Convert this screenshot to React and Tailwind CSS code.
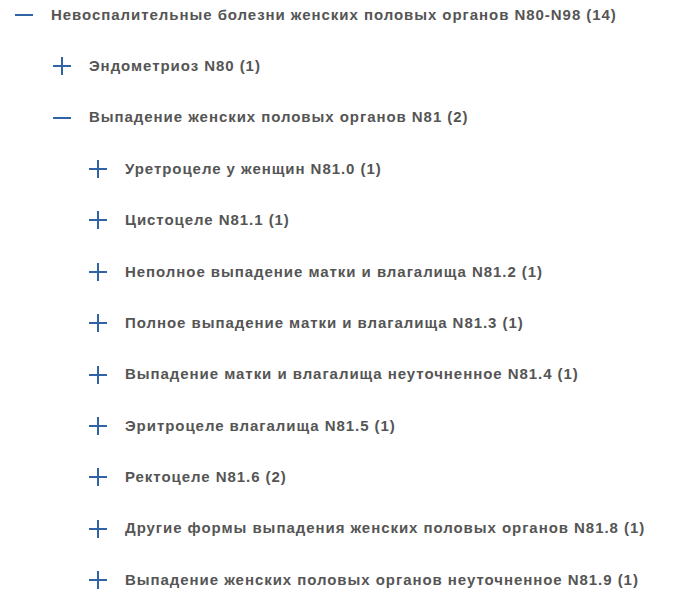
import React from 'react';

const items = [
  { level: 0, open: true, label: 'Невоспалительные болезни женских половых органов N80-N98 (14)' },
  { level: 1, open: false, label: 'Эндометриоз N80 (1)' },
  { level: 1, open: true, label: 'Выпадение женских половых органов N81 (2)' },
  { level: 2, open: false, label: 'Уретроцеле у женщин N81.0 (1)' },
  { level: 2, open: false, label: 'Цистоцеле N81.1 (1)' },
  { level: 2, open: false, label: 'Неполное выпадение матки и влагалища N81.2 (1)' },
  { level: 2, open: false, label: 'Полное выпадение матки и влагалища N81.3 (1)' },
  { level: 2, open: false, label: 'Выпадение матки и влагалища неуточненное N81.4 (1)' },
  { level: 2, open: false, label: 'Эритроцеле влагалища N81.5 (1)' },
  { level: 2, open: false, label: 'Ректоцеле N81.6 (2)' },
  { level: 2, open: false, label: 'Другие формы выпадения женских половых органов N81.8 (1)' },
  { level: 2, open: false, label: 'Выпадение женских половых органов неуточненное N81.9 (1)' },
];

const pad = ['pl-[14px]', 'pl-[52px]', 'pl-[88px]'];

function Toggle({ open }) {
  return (
    <svg width="20" height="20" viewBox="0 0 20 20" className="shrink-0">
      <line x1="1" y1="10" x2="19" y2="10" stroke="#2f63a3" strokeWidth="2" />
      {!open && <line x1="10" y1="1" x2="10" y2="19" stroke="#2f63a3" strokeWidth="2" />}
    </svg>
  );
}

export default function App() {
  return (
    <div className="w-[676px] h-[602px] bg-white overflow-hidden" style={{ fontFamily: '"Liberation Sans", Arial, sans-serif' }}>
      <div className="flex flex-col gap-[21.36px]">
        {items.map((item, i) => (
          <div key={i} className={`flex items-center h-[30px] ${pad[item.level]}`}>
            <Toggle open={item.open} />
            <span className="ml-[17px] text-[15px] font-bold text-[#555555] tracking-[0.95px] whitespace-nowrap">
              {item.label}
            </span>
          </div>
        ))}
      </div>
    </div>
  );
}
